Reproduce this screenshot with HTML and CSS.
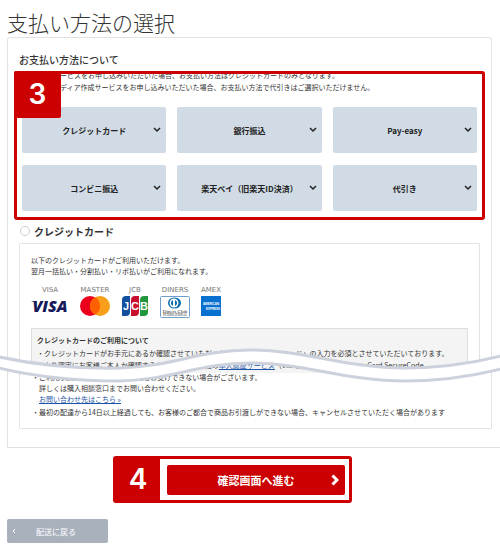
FILE: index.html
```html
<!DOCTYPE html>
<html lang="ja">
<head>
  <meta charset="UTF-8" />
  <meta name="viewport" content="width=device-width, initial-scale=1.0" />
  <title>支払い方法の選択</title>
  <link rel="stylesheet" href="styles.css">
</head>
<body>
  <h1>支払い方法の選択</h1>

  <main class="payment">
    <div class="panel panel-top">
      <h2>お支払い方法について</h2>

      <section class="frame">
        <span class="badge">3</span>
        <div class="notice">
          <p>ービスをお申し込みいただいた場合、お支払い方法はクレジットカードのみとなります。</p>
          <p>ディア作成サービスをお申し込みいただいた場合、お支払い方法で代引きはご選択いただけません。</p>
        </div>
        <div class="methods">
          <button type="button">クレジットカード<svg class="arrow" viewBox="0 0 8 6"><path d="M1 1l3 3 3-3" /></svg></button>
          <button type="button">銀行振込<svg class="arrow" viewBox="0 0 8 6"><path d="M1 1l3 3 3-3" /></svg></button>
          <button type="button">Pay-easy<svg class="arrow" viewBox="0 0 8 6"><path d="M1 1l3 3 3-3" /></svg></button>
          <button type="button">コンビニ振込<svg class="arrow" viewBox="0 0 8 6"><path d="M1 1l3 3 3-3" /></svg></button>
          <button type="button">楽天ペイ（旧楽天ID決済）<svg class="arrow" viewBox="0 0 8 6"><path d="M1 1l3 3 3-3" /></svg></button>
          <button type="button">代引き<svg class="arrow" viewBox="0 0 8 6"><path d="M1 1l3 3 3-3" /></svg></button>
        </div>
      </section>

      <label class="choice"><input type="radio" name="method" />クレジットカード</label>

      <section class="detail">
        <p>以下のクレジットカードがご利用いただけます。</p>
        <p>翌月一括払い・分割払い・リボ払いがご利用になれます。</p>

        <ul class="cards">
          <li>
            <span>VISA</span>
            <svg class="visa" width="38" height="22" viewBox="0 0 38 22">
              <text x="19" y="16" text-anchor="middle">VISA</text>
              <path d="M0 5h5l1 2z" />
            </svg>
          </li>
          <li>
            <span>MASTER</span>
            <svg width="30" height="22" viewBox="0 0 30 22">
              <circle cx="10" cy="10" r="10" fill="#eb001b" />
              <circle cx="20" cy="10" r="10" fill="#f79e1b" />
              <path d="M15 1.300a10 10 0 0 1 0 17.400a10 10 0 0 1 0-17.400z" fill="#ff5f00" />
            </svg>
          </li>
          <li>
            <span>JCB</span>
            <svg class="jcb" width="28" height="22" viewBox="0 0 28 22">
              <path d="M5 0h4v16q0 4-4 4H1V4q0-4 4-4z" fill="#12509f" />
              <path d="M14 0h4v16q0 4-4 4h-4V4q0-4 4-4z" fill="#c8102e" />
              <path d="M23 0h4v16q0 4-4 4h-4V4q0-4 4-4z" fill="#22963d" />
              <text x="5" y="14" text-anchor="middle">J</text>
              <text x="14" y="14" text-anchor="middle">C</text>
              <text x="23" y="14" text-anchor="middle">B</text>
            </svg>
          </li>
          <li>
            <span>DINERS</span>
            <svg class="diners" width="30" height="22" viewBox="0 0 30 22">
              <rect x=".5" y=".5" width="29" height="21" rx="1" fill="#fff" stroke="#6f9fcc" />
              <ellipse cx="14.500" cy="7" rx="6.500" ry="5.500" fill="#0069aa" />
              <circle cx="14" cy="7" r="4.500" fill="#fff" />
              <path d="M13 4v6a3.200 3.200 0 0 1 0-6zM15 4v6a3.200 3.200 0 0 0 0-6z" fill="#0069aa" />
              <text x="15" y="17" text-anchor="middle">Diners Club</text>
              <text x="15" y="20" text-anchor="middle" class="tiny">INTERNATIONAL</text>
            </svg>
          </li>
          <li>
            <span>AMEX</span>
            <svg class="amex" width="20" height="22" viewBox="0 0 20 22">
              <rect width="20" height="20" fill="#0870cf" />
              <text x="10" y="9" text-anchor="middle">AMERICAN</text>
              <text x="12" y="14" text-anchor="middle">EXPRESS</text>
            </svg>
          </li>
        </ul>

        <div class="usage">
          <h3>クレジットカードのご利用について</h3>
          <p>・クレジットカードがお手元にあるか確認させていただくため「セキュリティコード」の入力を必須とさせていただいております。</p>
          <p>・より確実にお客様ご本人か確認するため、カード会社の<a href="#">本人認証サービス</a>（VISA認証サービス、MasterCard SecureCode</p>
        </div>
      </section>
    </div>

    <div class="panel-bottom">
      <div class="detail-end">
        <p>・ご利用状況によってはご注文の品をお受けできない場合がございます。</p>
        <p>詳しくは購入相談窓口までお問い合わせください。</p>
        <p><a href="#">お問い合わせ先はこちら »</a></p>
        <p class="item">・最初の配達から14日以上経過しても、お客様のご都合で商品お引渡しができない場合、キャンセルさせていただく場合があります</p>
      </div>
    </div>

    <!-- 省略を示す波線 -->
    <svg class="wave" viewBox="0 0 500 40" preserveAspectRatio="none">
      <path class="band" d="M-5 11C35 20 75 24 120 23C170 22 200 5 250 5C305 5 345 23 405 23C440 23 470 19 505 10V23C470 32 440 36 405 36C345 36 305 18 250 18C200 18 170 35 120 36C75 36 35 32 -5 22z" />
      <path d="M-5 11C35 20 75 24 120 23C170 22 200 5 250 5C305 5 345 23 405 23C440 23 470 19 505 10" />
      <path d="M-5 22C35 32 75 36 120 36C170 35 200 18 250 18C305 18 345 36 405 36C440 36 470 32 505 23" />
    </svg>
  </main>

  <div class="submit">
    <span class="number">4</span>
    <button type="button">確認画面へ進む<svg class="next" viewBox="0 0 8 12"><path d="M1.500 1.500L6 6l-4.500 4.500" /></svg></button>
  </div>

  <button type="button" class="back"><svg viewBox="0 0 4 6"><path d="M3 1L1 3l2 2" /></svg>配送に戻る</button>
</body>
</html>
```

FILE: styles.css
```css
:root {
  --red: #c00;
  --line: #e2e2e2;
  --tile: #d1dbe5;
  --text: #333;
  --link: #1d54a7;
}

* {
  box-sizing: border-box;
}

body {
  margin: 0;
  padding: 7px 8px 0 7px;
  background: #fff;
  color: var(--text);
  font-family: "Noto Sans CJK JP", sans-serif;
  font-size: 7px;
  line-height: 11px;
  overflow-x: hidden;
}

h1,
h2,
h3,
p,
ul {
  margin: 0;
  padding: 0;
}

h1 {
  font-size: 21px;
  font-weight: 300;
  line-height: 30px;
}

h2 {
  padding-left: 5px;
  font-size: 10px;
  font-weight: 500;
  line-height: 16px;
}

a {
  color: var(--link);
}

button {
  border: none;
  border-radius: 2px;
  font-family: inherit;
  cursor: pointer;
}

svg {
  display: block;
}

.payment {
  position: relative;
}

.panel {
  border: 1px solid var(--line);
  border-bottom: none;
  border-radius: 3px 3px 0 0;
}

.panel-top {
  padding: 14px 6px 0;
}

/* 手順3 */
.frame {
  position: relative;
  margin-top: 3px;
  padding: 3px 3px 9px;
}

.frame::after {
  content: "";
  position: absolute;
  inset: 0;
  border: 3px solid var(--red);
  border-radius: 3px;
  pointer-events: none;
}

.badge {
  position: absolute;
  z-index: 1;
  top: 0;
  left: 0;
  width: 47px;
  height: 47px;
  border-radius: 2px;
  background: var(--red);
}

.badge,
.number {
  color: #fff;
  font-family: Inter, sans-serif;
  font-size: 28px;
  font-weight: 600;
  line-height: 47px;
  text-align: center;
}

.notice {
  display: flow-root;
  height: 33px;
  padding-left: 43px;
  white-space: nowrap;
}

.notice p {
  line-height: 12px;
}

.notice p:first-child {
  margin-top: -5px;
}

.methods {
  display: grid;
  grid-template-columns: repeat(3, 1fr);
  gap: 12px 11px;
  padding: 0 5px;
}

.methods button {
  position: relative;
  height: 46px;
  padding: 0;
  background: var(--tile);
  color: #222;
  font-size: 8px;
  font-weight: 700;
}

.arrow {
  position: absolute;
  top: 20px;
  right: 5px;
  width: 8px;
  height: 6px;
}

.arrow path,
.next path,
.back path {
  fill: none;
  stroke: #222;
  stroke-width: 1.5;
}

.choice {
  display: flex;
  align-items: center;
  gap: 4px;
  height: 22px;
  padding-left: 6px;
  font-size: 10px;
  font-weight: 700;
}

.choice input {
  appearance: none;
  width: 10px;
  height: 10px;
  margin: 0;
  border: 1px solid #ccc;
  border-radius: 50%;
}

.detail {
  height: 125px;
  margin: 1px 5px 0;
  padding: 11px 11px 0;
  border: 1px solid var(--line);
  border-bottom: none;
  border-radius: 2px 2px 0 0;
}

.cards {
  display: flex;
  gap: 11px;
  margin-top: 8px;
  list-style: none;
}

.cards li {
  display: flex;
  flex-direction: column;
  align-items: center;
  color: #777;
  font-family: "DejaVu Sans", sans-serif;
}

.visa text {
  fill: #15195a;
  font-family: "Open Sans", sans-serif;
  font-size: 16px;
  font-style: italic;
  font-weight: 800;
}

.visa path {
  fill: #15195a;
}

.jcb text {
  fill: #fff;
  font-family: "Liberation Sans", sans-serif;
  font-size: 11px;
  font-weight: 700;
}

.diners text {
  fill: #222;
  font-family: "Liberation Serif", serif;
  font-size: 5px;
}

.diners .tiny {
  font-size: 3px;
}

.amex text {
  fill: #fff;
  font-family: "Liberation Sans", sans-serif;
  font-size: 3px;
  font-weight: 700;
}

.usage {
  height: 45px;
  margin-top: 10px;
  padding: 5px;
  border: 1px solid #ddd;
  border-bottom: none;
  background: #f4f4f4;
  white-space: nowrap;
}

.usage h3 {
  font-size: 7px;
  font-weight: 700;
  line-height: 13px;
}

.usage p {
  line-height: 12px;
}

/* 波線より下の部分 */
.panel-bottom {
  margin-right: -16px;
  padding: 0 15px 18px 11px;
  border: 1px solid var(--line);
  border-top: none;
}

.detail-end {
  padding: 4px 0 10px 19px;
  border: 1px solid var(--line);
  border-top: none;
  border-radius: 0 0 2px 2px;
  white-space: nowrap;
}

.detail-end .item {
  margin-top: 2px;
}

.detail-end p:first-child,
.detail-end .item {
  text-indent: -7px;
}

.wave {
  position: absolute;
  top: 308px;
  left: -7px;
  width: 100vw;
  height: 40px;
}

.wave path {
  fill: none;
  stroke: #ccd1dc;
  stroke-width: 3;
}

.wave .band {
  fill: #fff;
  stroke: none;
}

/* 手順4 */
.submit {
  display: flex;
  width: 239px;
  margin: 8px auto 0 106px;
  border: 3px solid var(--red);
  border-radius: 3px;
}

.number {
  width: 44px;
  margin: -3px 0;
  background: var(--red);
}

.submit button {
  position: relative;
  flex: 1;
  height: 30px;
  margin: 6px 4px 5px 7px;
  background: var(--red);
  color: #fff;
  font-size: 11px;
  font-weight: 700;
}

.next {
  position: absolute;
  top: 9px;
  right: 6px;
  width: 8px;
  height: 12px;
}

.next path {
  stroke: #fff;
  stroke-width: 3;
}

.back {
  display: flex;
  align-items: center;
  gap: 20px;
  width: 101px;
  height: 24px;
  margin-top: 16px;
  padding: 0 5px;
  background: #a9b1bd;
  color: #fff;
  font-size: 8px;
}

.back svg {
  width: 4px;
  height: 6px;
}

.back path {
  stroke: #fff;
  stroke-width: 1;
}
```
